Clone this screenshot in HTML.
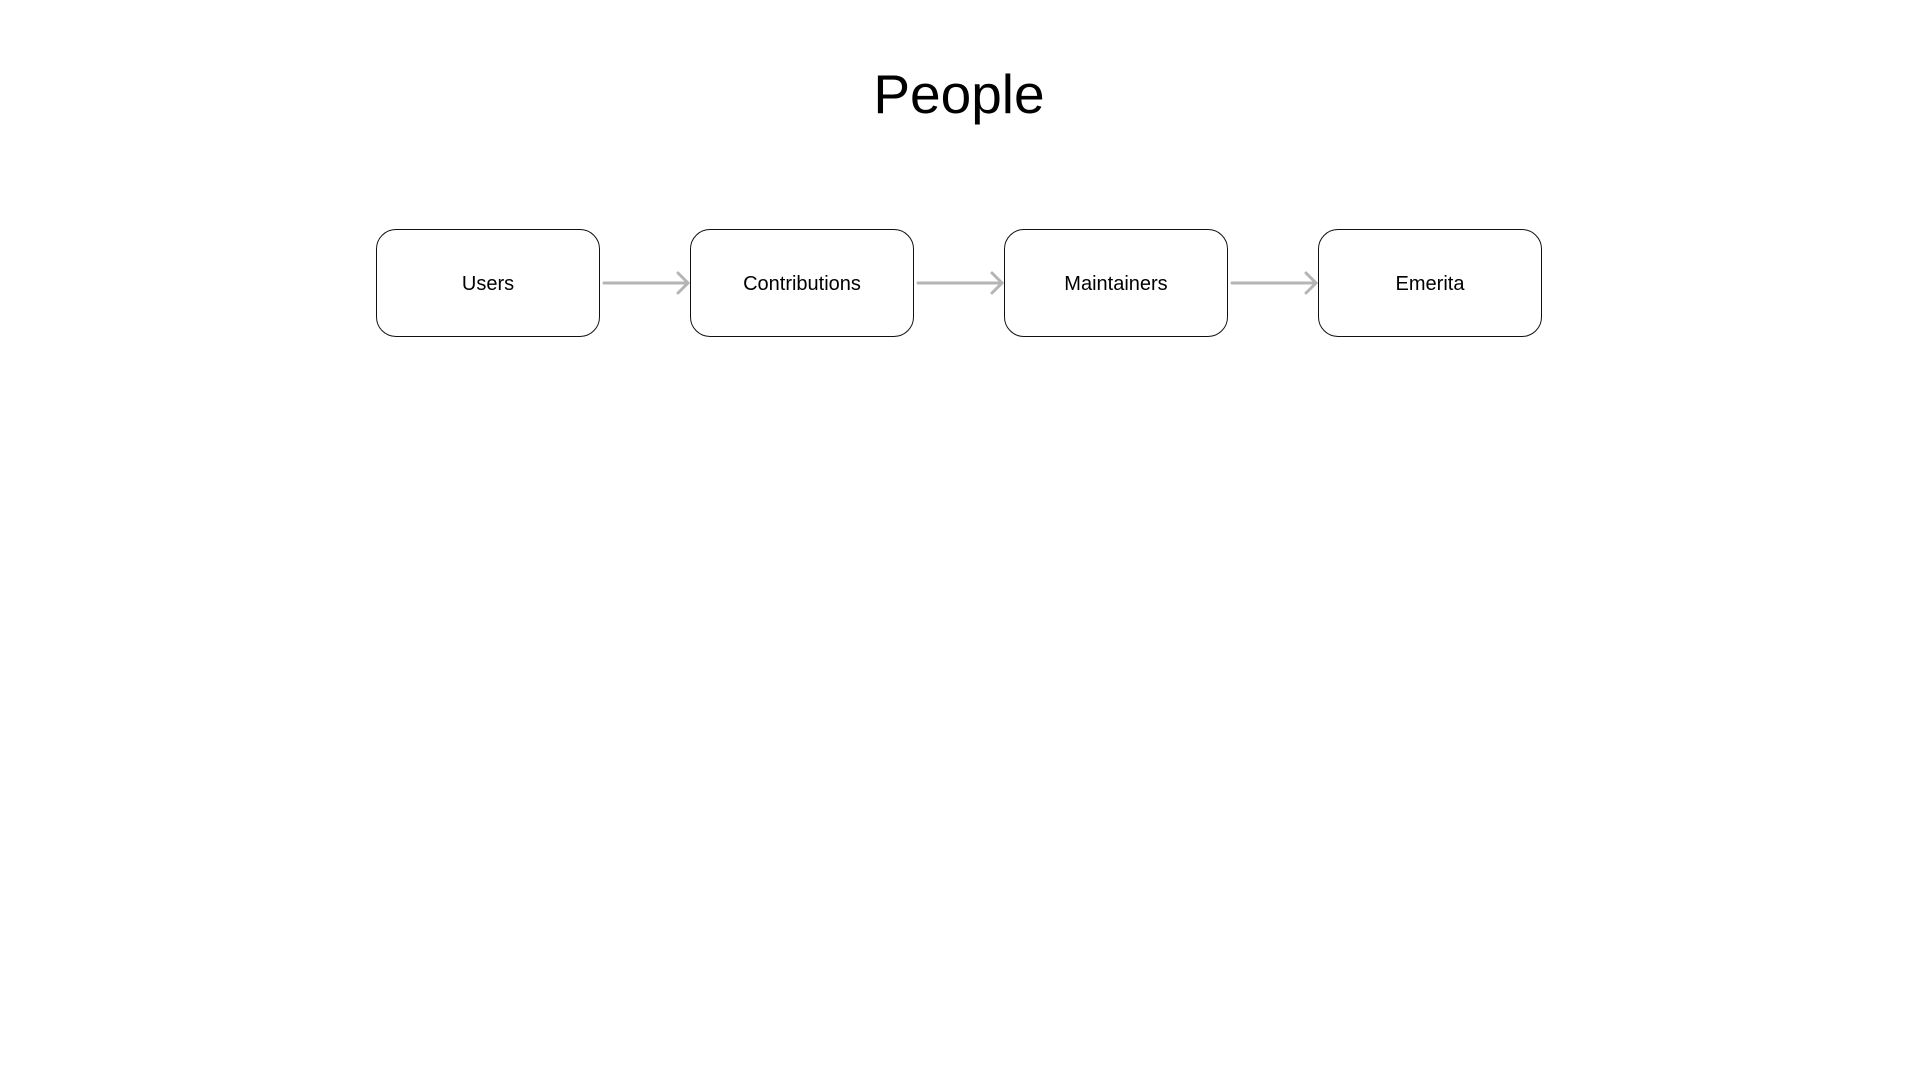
<!DOCTYPE html>
<html><head><style>
body{margin:0;width:1920px;height:1080px;background:#fff;position:relative;font-family:"Liberation Sans",sans-serif;overflow:hidden}
h1{position:absolute;left:0;width:1918px;top:59px;margin:0;text-align:center;font-weight:400;font-size:55px;line-height:70px;color:#000}
.b{position:absolute;top:229px;width:224px;height:108px;border:1.3px solid #111;border-radius:20px;box-sizing:border-box;display:flex;align-items:center;justify-content:center;font-size:20px;color:#000;padding-top:3px}
</style></head><body>
<h1>People</h1>
<div class="b" style="left:376px">Users</div>
<div class="b" style="left:690px">Contributions</div>
<div class="b" style="left:1004px">Maintainers</div>
<div class="b" style="left:1318px">Emerita</div>
<svg width="1920" height="1080" style="position:absolute;left:0;top:0" fill="none" stroke="#b5b5b5" stroke-width="3" stroke-linecap="round">
<path d="M604 283H688M678 273L688 283L678 293"/>
<path d="M918 283H1002M992 273L1002 283L992 293"/>
<path d="M1232 283H1316M1306 273L1316 283L1306 293"/>
</svg>
</body></html>
